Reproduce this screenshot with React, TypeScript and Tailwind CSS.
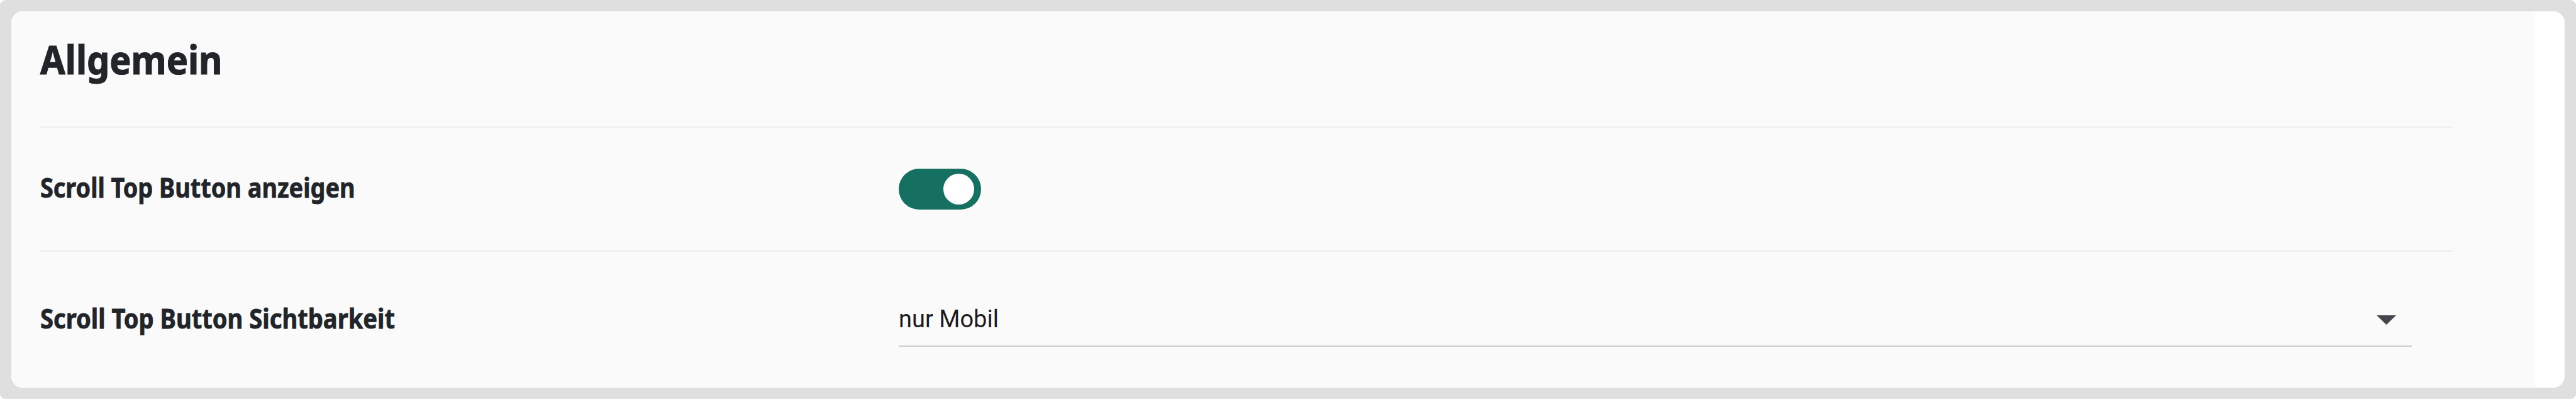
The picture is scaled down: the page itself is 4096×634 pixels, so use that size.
import { useState } from "react";
import type { ReactNode } from "react";

function Label({ children, className }: { children: ReactNode; className: string }) {
  return (
    <div className="w-[1366px] shrink-0 pl-px">
      <span
        className={`inline-block origin-left whitespace-nowrap font-['Noto_Sans',sans-serif] text-[42.5px] leading-[60px] font-bold text-[#212529] [-webkit-text-stroke:0.8px_#212529] ${className}`}
      >
        {children}
      </span>
    </div>
  );
}

function Toggle({ checked, onChange }: { checked: boolean; onChange: (v: boolean) => void }) {
  return (
    <button
      role="switch"
      aria-checked={checked}
      onClick={() => onChange(!checked)}
      className={
        checked
          ? "flex h-[65.5px] w-[130.5px] items-center justify-end rounded-full bg-[#167062] pr-[10.5px]"
          : "flex h-[65.5px] w-[130.5px] items-center justify-start rounded-full bg-[#9e9e9e] pl-[10.5px]"
      }
    >
      <span className="mb-px size-[49px] rounded-full bg-white" />
    </button>
  );
}

export default function App() {
  const [visible, setVisible] = useState(true);

  return (
    <div className="h-[634px] w-[4096px] overflow-hidden rounded-[9px] bg-[#dfdfdf] p-[18px]">
      <div className="flex h-[598px] overflow-hidden rounded-[18px] bg-white">
        <div className="flex w-[4013px] flex-col bg-[#fafafa] pl-[45px]">
          <div className="flex h-[185px] w-[3837px] items-start border-b-2 border-[#eeeeee] pt-[32px] pl-px">
            <h2 className="origin-left scale-x-[0.912] whitespace-nowrap font-['Noto_Sans',sans-serif] text-[63px] leading-[88px] font-bold text-[#212529] [-webkit-text-stroke:1.2px_#212529]">
              Allgemein
            </h2>
          </div>

          <div className="flex h-[197px] w-[3837px] items-center border-b-2 border-[#eeeeee]">
            <Label className="mb-[6px] scale-x-[0.89]">Scroll Top Button anzeigen</Label>
            <Toggle checked={visible} onChange={setVisible} />
          </div>

          <div className="flex h-[216px] w-[3837px] items-start pt-[76px]">
            <Label className="scale-x-[0.897]">Scroll Top Button Sichtbarkeit</Label>
            <div className="flex h-[75px] w-[2406px] items-start justify-between border-b-2 border-[#c8d0c8] pr-[25px]">
              <span className="pt-px font-[Roboto,sans-serif] text-[38px] leading-[60px] text-[#1d1b20]">nur Mobil</span>
              <svg className="mt-[25px] h-[15px] w-[31px]" viewBox="0 0 31 15">
                <path d="M0 0H31L15.5 15Z" fill="#49454f" />
              </svg>
            </div>
          </div>
        </div>
      </div>
    </div>
  );
}
